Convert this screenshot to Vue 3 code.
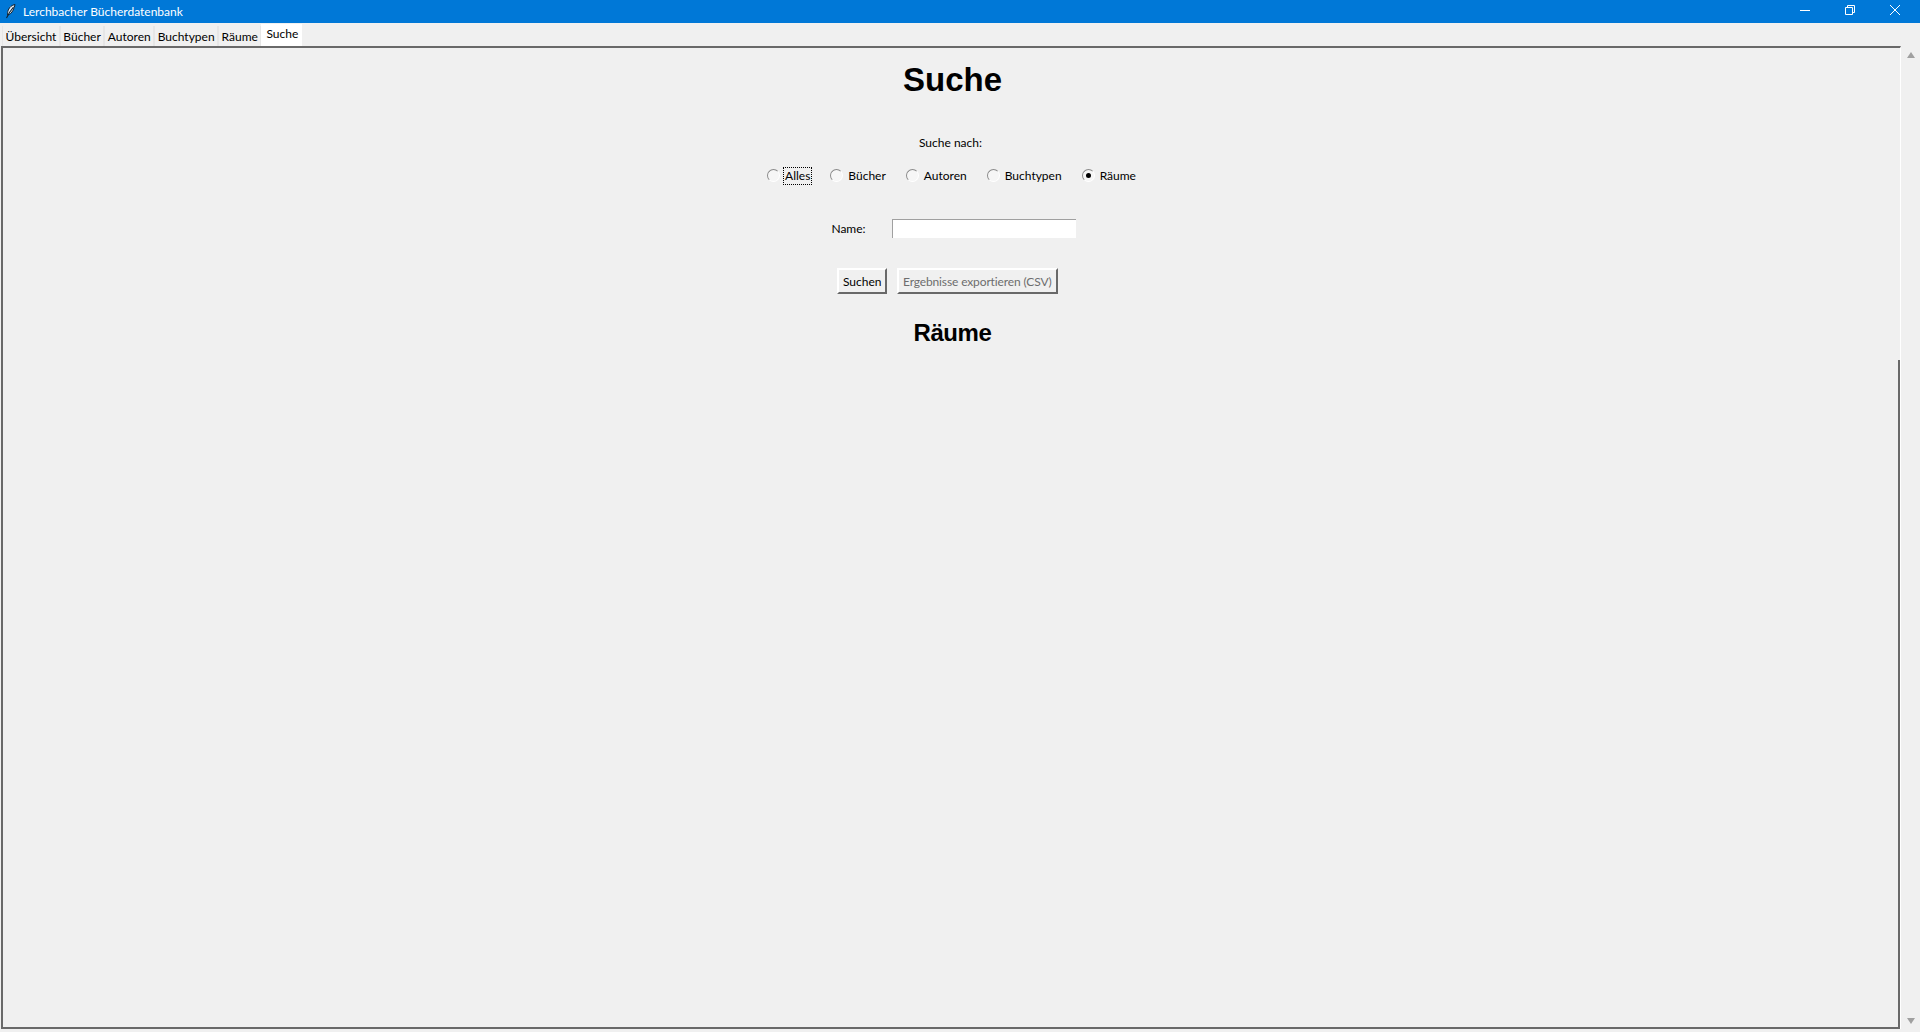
<script setup>
const tabs = ['Übersicht', 'Bücher', 'Autoren', 'Buchtypen', 'Räume', 'Suche']
const radios = [
  { label: 'Alles', focus: true },
  { label: 'Bücher' },
  { label: 'Autoren' },
  { label: 'Buchtypen' },
  { label: 'Räume', checked: true },
]
</script>

<template>
  <div class="window">
    <header class="titlebar">
      <svg class="feather" width="16" height="18" viewBox="0 0 16 18">
        <path d="M13 1.500C10 2 7.500 4 6.300 7c-.7 1.800-.9 3.500-.6 5 2.300-.5 4-2.200 5.300-4.700 1-2 1.600-3.800 2-5.800z" fill="#e8f0f8" stroke="#10202e" stroke-width="1" />
        <path d="M11.500 4 7.500 9.500 4.500 15" fill="none" stroke="#10202e" stroke-width="1.100" />
      </svg>
      <span class="title">Lerchbacher Bücherdatenbank</span>
      <div class="controls">
        <button class="ctl">
          <svg width="10" height="10" viewBox="0 0 10 10"><path d="M0 5.500h10" stroke="#fff" fill="none" /></svg>
        </button>
        <button class="ctl">
          <svg width="10" height="10" viewBox="0 0 10 10"><path d="M.5 2.500h7v7h-7zM2.500 2.500V.5h7v7H7.500" stroke="#fff" fill="none" /></svg>
        </button>
        <button class="ctl">
          <svg width="10" height="10" viewBox="0 0 10 10"><path d="M0 0l10 10M10 0L0 10" stroke="#fff" fill="none" /></svg>
        </button>
      </div>
    </header>

    <nav class="tabs">
      <div v-for="t in tabs" :key="t" class="tab" :class="{ selected: t === 'Suche' }">{{ t }}</div>
    </nav>

    <div class="body">
      <main class="canvas">
        <h1>Suche</h1>
        <div class="search-for">Suche nach:</div>
        <div class="radios">
          <label v-for="r in radios" :key="r.label" class="radio">
            <span class="dot" :class="{ on: r.checked }"></span>
            <span class="radio-text" :class="{ focus: r.focus }">{{ r.label }}</span>
          </label>
        </div>
        <div class="name-row">
          <span class="name-label">Name:</span>
          <input class="name-input" type="text" />
        </div>
        <div class="buttons">
          <button class="btn">Suchen</button>
          <button class="btn disabled">Ergebnisse exportieren (CSV)</button>
        </div>
        <h2>Räume</h2>
      </main>
      <div class="edge">
        <div class="edge-gap"></div>
        <div class="edge-line"></div>
      </div>
      <aside class="scrollbar">
        <span class="arrow up"></span>
        <span class="arrow down"></span>
      </aside>
    </div>
  </div>
</template>

<style>
html, body { margin: 0; height: 100%; background: #f0f0f0; overflow: hidden; }
#app { height: 100%; }
</style>

<style scoped>
* { box-sizing: border-box; }
.window {
  height: 1032px;
  display: flex;
  flex-direction: column;
  background: #f0f0f0;
  font-family: Lato, "Noto Sans", sans-serif;
  font-size: 12px;
  color: #000;
}
.titlebar {
  height: 23px;
  flex: none;
  background: #0078d7;
  display: flex;
  align-items: center;
  padding: 0 3px 0 2px;
  color: #fff;
}
.feather { margin-right: 5px; flex: none; }
.title { flex: 1; }
.controls { display: flex; height: 100%; }
.ctl {
  width: 45px;
  height: 100%;
  border: 0;
  padding: 0 0 3px;
  background: none;
  display: flex;
  align-items: center;
  justify-content: center;
}
.tabs {
  height: 23px;
  flex: none;
  display: flex;
  align-items: flex-end;
  padding-left: 2px;
}
.tab {
  height: 20px;
  line-height: 22px;
  padding: 0 2.500px;
  border: 1px solid #e6e6e6;
  border-width: 0 1px;
}
.tab.selected {
  height: 22px;
  line-height: 20px;
  background: #fff;
  padding: 0 4px 0 5px;
  border: 0;
}
.body {
  flex: 1;
  display: flex;
  min-height: 0;
  padding: 0 0 3px 1px;
}
.canvas {
  flex: 1;
  border: 2px solid #696969;
  border-right: 0;
  display: flex;
  flex-direction: column;
  align-items: center;
  padding-left: 4px;
}
h1 {
  margin: 13px 0 0;
  font: bold 33px/38px "Liberation Sans", Arial, sans-serif;
}
.search-for { margin-top: 35px; line-height: 17px; padding-right: 4px; }
.radios {
  margin-top: 16px;
  display: flex;
  gap: 18px;
  height: 18px;
  align-items: center;
}
.radio { display: flex; align-items: center; gap: 3px; }
.dot {
  width: 13px;
  height: 13px;
  border-radius: 50%;
  background: #f6f6f6;
  border: 1px solid #8a8a8a;
  border-right-color: #fff;
  border-bottom-color: #fff;
  display: flex;
  align-items: center;
  justify-content: center;
  margin-top: -2px;
}
.dot.on::after {
  content: "";
  width: 5px;
  height: 5px;
  border-radius: 50%;
  background: #000;
}
.radio-text { padding: 0 1px; line-height: 16px; border: 1px solid transparent; }
.radio-text.focus { border: 1px dotted #000; }
.name-row {
  margin-top: 34px;
  display: flex;
  align-items: center;
  gap: 26px;
  height: 19px;
  padding-left: 2px;
}
.name-input {
  width: 184px;
  height: 19px;
  background: #fff;
  border: 0;
  border-top: 1px solid #a0a0a0;
  border-left: 1px solid #a0a0a0;
  padding: 0;
  outline: none;
}
.buttons {
  margin-top: 30px;
  display: flex;
  gap: 10px;
  padding-right: 10px;
}
.btn {
  height: 26px;
  padding: 0 3.500px;
  font: inherit;
  color: #000;
  background: #f0f0f0;
  border: 2px solid;
  border-color: #fff #696969 #696969 #fff;
}
.btn.disabled { color: #6d6d6d; letter-spacing: -0.13px; padding: 0 4px; }
h2 {
  margin: 25px 0 0;
  font: bold 24px/28px "Liberation Sans", Arial, sans-serif;
  letter-spacing: -0.4px;
}
.edge {
  width: 3px;
  flex: none;
  display: flex;
  flex-direction: column;
}
.edge-gap { height: 314px; border-top: 2px solid #696969; border-right: 1px solid #fff; }
.edge-line { flex: 1; border-right: 1px solid #fff; border-left: 2px solid #696969; }
.scrollbar {
  width: 19px;
  flex: none;
  display: flex;
  flex-direction: column;
  justify-content: space-between;
  align-items: center;
  padding: 6px 0 5px;
}
.arrow { width: 0; height: 0; border: 4px solid transparent; }
.arrow.up { border-top: 0; border-bottom: 6px solid #a0a0a0; }
.arrow.down { border-bottom: 0; border-top: 6px solid #a0a0a0; }
</style>
